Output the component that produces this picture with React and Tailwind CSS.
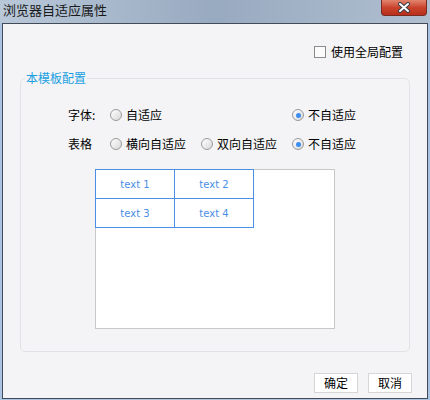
import React from 'react';

const FONT = { fontFamily: '"Noto Sans CJK SC", "Liberation Sans", sans-serif' };

// ────────── Radio ──────────
function Radio({ checked, label }) {
  return (
    <label className="flex items-center gap-[4px] h-[14px]">
      <span className="w-[12px] h-[12px] rounded-full border border-[#9a9a9a] bg-gradient-to-br from-[#ffffff] to-[#d8d8d8] flex items-center justify-center">
        {checked && <span className="w-[5px] h-[5px] rounded-full bg-[#3b8df0]" />}
      </span>
      <span className="text-[12px] leading-[14px] text-black">{label}</span>
    </label>
  );
}

// ────────── Close button ──────────
function CloseButton() {
  return (
    <div className="w-[46px] h-[16px] rounded-b-[4px] border border-t-0 border-[#7a2a20] bg-gradient-to-b from-[#e2846e] via-[#c9432c] to-[#b8301c] flex items-center justify-center">
      <svg width="14" height="11" viewBox="0 0 14 11">
        <path d="M3 2 L11 9 M11 2 L3 9" stroke="#3a3f4a" strokeWidth="4" strokeLinecap="round" />
        <path d="M3 2 L11 9 M11 2 L3 9" stroke="#ffffff" strokeWidth="2" strokeLinecap="round" />
      </svg>
    </div>
  );
}

// ────────── Preview table ──────────
function PreviewTable() {
  const cells = ['text 1', 'text 2', 'text 3', 'text 4'];
  return (
    <div className="ml-[74px] mt-[18px] w-[240px] h-[160px] bg-white border border-[#c8c8c8] relative">
      <div className="absolute -left-[1px] -top-[1px] grid grid-cols-[79px_79px] border-l border-t border-[#4a8ee6]">
        {cells.map(c => (
          <div
            key={c}
            className="h-[29px] border-r border-b border-[#4a8ee6] flex items-center justify-center text-[10px] text-[#4a8ee6]"
            style={{ fontFamily: '"DejaVu Sans", sans-serif' }}
          >
            {c}
          </div>
        ))}
      </div>
    </div>
  );
}

export default function App() {
  return (
    <div className="w-[430px] h-[400px] bg-gradient-to-r from-[#a9c3e2] via-[#b3c4d8] to-[#a9c3e2] flex flex-col" style={FONT}>
      {/* title bar */}
      <div className="h-[23px] flex items-start bg-gradient-to-r from-[#b9c8d9] via-[#98aac0] to-[#b0bfd0]">
        <span className="ml-[3px] mt-[2px] text-[13px] leading-[16px] text-[#1a1a1a]">浏览器自适应属性</span>
        <div className="ml-auto mr-[3px]">
          <CloseButton />
        </div>
      </div>

      {/* dialog body */}
      <div className="mx-[2px] h-[376px] border border-[#434b58] bg-[#f4f4f6] flex flex-col">
        <div className="flex justify-end items-center gap-[5px] pt-[21px] pr-[24px]">
          <span className="w-[12px] h-[12px] border border-[#8a8a8a] bg-[#fbfbfb]" />
          <span className="text-[12px] leading-[14px] text-black">使用全局配置</span>
        </div>

        <fieldset className="mx-[17px] mt-[12px] h-[281px] border border-[#e2e2e6] rounded-[5px]">
          <legend className="ml-[4px] px-[1px] text-[12px] leading-[14px] text-[#1aa0e0]">本模板配置</legend>

          <div className="grid grid-cols-[42px_91px_91px_91px] ml-[47px] mt-[23px] gap-y-[15px] items-center">
            <span className="text-[12px] leading-[14px] text-black">字体:</span>
            <Radio label="自适应" />
            <span />
            <Radio checked label="不自适应" />

            <span className="text-[12px] leading-[14px] text-black">表格</span>
            <Radio label="横向自适应" />
            <Radio label="双向自适应" />
            <Radio checked label="不自适应" />
          </div>

          <PreviewTable />
        </fieldset>

        <div className="mt-auto mb-[5px] mr-[15px] flex justify-end gap-[10px]">
          <button className="w-[44px] h-[20px] bg-white border border-[#d6d6d6] text-[12px] leading-[14px] text-black">确定</button>
          <button className="w-[44px] h-[20px] bg-white border border-[#d6d6d6] text-[12px] leading-[14px] text-black">取消</button>
        </div>
      </div>
    </div>
  );
}
